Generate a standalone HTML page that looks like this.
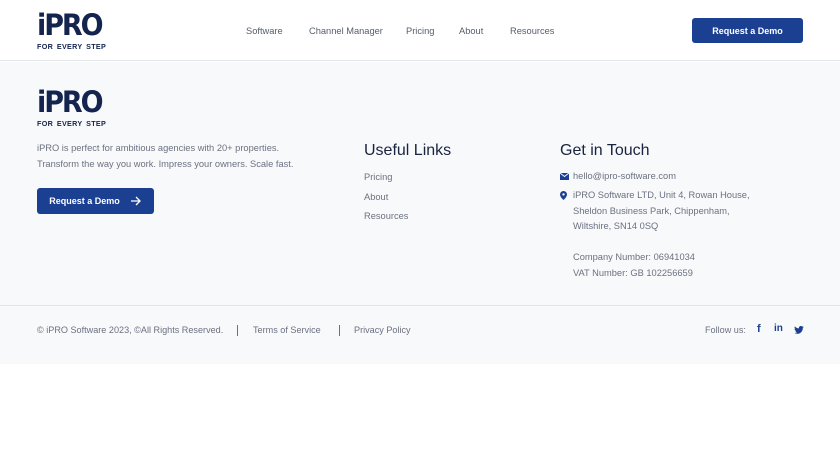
<!DOCTYPE html>
<html><head><meta charset="utf-8"><style>
*{margin:0;padding:0;box-sizing:border-box}
body{width:840px;height:472px;background:#fff;font-family:"Liberation Sans",sans-serif;position:relative;overflow:hidden}
.abs{position:absolute}
.hdr{left:0;top:0;width:840px;height:61px;background:#fff;border-bottom:1px solid #e4e6ea}
.ftr{left:0;top:62px;width:840px;height:302px;background:#f8f9fb}
.logo .big{font-weight:900;font-size:29px;color:#14244f;letter-spacing:-2.2px;line-height:26px;font-family:"DejaVu Sans","Liberation Sans",sans-serif;transform:scaleX(0.93);transform-origin:left}
.logo .small{font-weight:bold;font-size:7.2px;color:#14244f;letter-spacing:0.3px;margin-top:4px;word-spacing:1.5px}
.nav{font-size:9.3px;color:#555d6b}
.btn{background:#1b3f91;color:#fff;font-weight:bold;font-size:9px;border-radius:3px;display:flex;align-items:center;justify-content:center}
.t{font-size:9.3px;color:#6b7180;line-height:15.5px}
h3{font-weight:normal;font-size:16px;color:#1a2340}
</style></head><body>
<div class="abs hdr"></div>
<div class="abs ftr"></div>
<div class="abs logo" style="left:37px;top:12px"><div class="big">iPRO</div><div class="small">FOR EVERY STEP</div></div>
<div class="abs nav" style="left:246px;top:26px">Software</div>
<div class="abs nav" style="left:309px;top:26px">Channel Manager</div>
<div class="abs nav" style="left:406px;top:26px">Pricing</div>
<div class="abs nav" style="left:459px;top:26px">About</div>
<div class="abs nav" style="left:510px;top:26px">Resources</div>
<div class="abs btn" style="left:692px;top:18px;width:111px;height:25px">Request a Demo</div>

<div class="abs logo" style="left:37px;top:89px"><div class="big">iPRO</div><div class="small">FOR EVERY STEP</div></div>
<div class="abs t" style="left:37px;top:141px">iPRO is perfect for ambitious agencies with 20+ properties.<br>Transform the way you work. Impress your owners. Scale fast.</div>
<div class="abs btn" style="left:37px;top:188px;width:117px;height:26px">Request a Demo<svg width="12" height="10" viewBox="0 0 12 10" style="margin-left:10px"><path d="M1 5h9M6 1l4 4-4 4" stroke="#fff" stroke-width="1.3" fill="none"/></svg></div>

<h3 class="abs" style="left:364px;top:142px">Useful Links</h3>
<div class="abs t" style="left:364px;top:168px;line-height:19.5px">Pricing<br>About<br>Resources</div>

<h3 class="abs" style="left:560px;top:142px">Get in Touch</h3>
<svg class="abs" style="left:560px;top:173px" width="9" height="7" viewBox="0 0 9 7"><rect width="9" height="7" fill="#1b3f91"/><path d="M0 0l4.5 3.5L9 0" stroke="#f8f9fb" stroke-width="1" fill="none"/></svg>
<div class="abs t" style="left:573px;top:169px">hello@ipro-software.com</div>
<svg class="abs" style="left:560px;top:191px" width="7" height="9" viewBox="0 0 7 9"><path d="M3.5 0A3.5 3.5 0 0 0 0 3.5C0 6 3.5 9 3.5 9S7 6 7 3.5A3.5 3.5 0 0 0 3.5 0z" fill="#1b3f91"/><circle cx="3.5" cy="3.4" r="1.2" fill="#f8f9fb"/></svg>
<div class="abs t" style="left:573px;top:188px">iPRO Software LTD, Unit 4, Rowan House,<br>Sheldon Business Park, Chippenham,<br>Wiltshire, SN14 0SQ<br><br>Company Number: 06941034<br>VAT Number: GB 102256659</div>

<div class="abs" style="left:0;top:305px;width:840px;height:1px;background:#e2e4e8"></div>
<div class="abs t" style="left:37px;top:323px;font-size:9.1px">© iPRO Software 2023, ©All Rights Reserved.</div>
<div class="abs" style="left:237px;top:325px;width:1px;height:11px;background:#6b7180"></div>
<div class="abs t" style="left:253px;top:323px;font-size:9.1px">Terms of Service</div>
<div class="abs" style="left:339px;top:325px;width:1px;height:11px;background:#6b7180"></div>
<div class="abs t" style="left:354px;top:323px;font-size:9.1px">Privacy Policy</div>
<div class="abs t" style="left:705px;top:323px;font-size:9.1px">Follow us:</div>
<div class="abs" style="left:757px;top:323px;font-size:11px;font-weight:bold;color:#1b3f91">f</div>
<div class="abs" style="left:774px;top:323px;font-size:10px;font-weight:bold;color:#1b3f91">in</div>
<svg class="abs" style="left:794px;top:326px" width="10" height="8" viewBox="0 0 24 20"><path d="M24 2.4a10 10 0 0 1-2.8.8A5 5 0 0 0 23.3.4a10 10 0 0 1-3.1 1.2A4.9 4.9 0 0 0 11.8 6 14 14 0 0 1 1.7.9a4.9 4.9 0 0 0 1.5 6.6A4.9 4.9 0 0 1 1 6.9a4.9 4.9 0 0 0 3.9 4.9 5 5 0 0 1-2.2.1 4.9 4.9 0 0 0 4.6 3.4A9.9 9.9 0 0 1 0 17.3 14 14 0 0 0 7.5 19.5c9.1 0 14-7.5 14-14v-.6A10 10 0 0 0 24 2.4z" fill="#1b3f91"/></svg>
</body></html>
